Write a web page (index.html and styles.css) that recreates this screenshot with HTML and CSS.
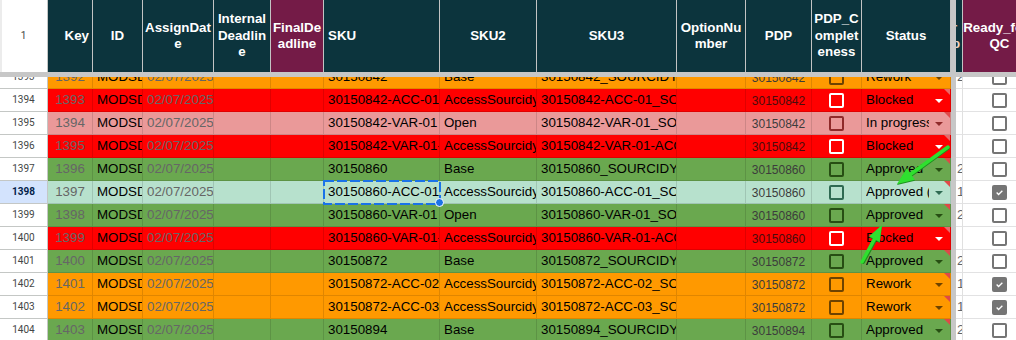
FILE: index.html
```html
<!DOCTYPE html>
<html>
<head>
<meta charset="utf-8">
<link rel="stylesheet" href="styles.css">
</head>
<body>
<div class="sheet">
  <div class="row head">
    <div class="c rn">1</div>
    <div class="c key hr">Key</div>
    <div class="c id">ID</div>
    <div class="c dt">AssignDat<br>e</div>
    <div class="c ind">Internal<br>Deadlin<br>e</div>
    <div class="c fd pur">FinalDe<br>adline</div>
    <div class="c sku hl">SKU</div>
    <div class="c s2">SKU2</div>
    <div class="c s3">SKU3</div>
    <div class="c opt">OptionNu<br>mber</div>
    <div class="c pdp">PDP</div>
    <div class="c pc">PDP_C<br>omplet<br>eness</div>
    <div class="c st">Status</div>
    <div class="vd"></div>
    <div class="c nr"><span class="peek">r<br>p</span></div>
    <div class="c rq pur">Ready_for_<br>QC</div>
  </div>
  <div class="hdiv"></div>
  <div class="body">
    <div class="row o first">
      <div class="c rn">1393</div><div class="c key">1392</div><div class="c id">MODSD</div><div class="c dt">02/07/2025</div><div class="c ind"></div><div class="c fd"></div>
      <div class="c sku">30150842</div><div class="c s2">Base</div><div class="c s3">30150842_SOURCIDY</div><div class="c opt"></div><div class="c pdp">30150842</div>
      <div class="c pc"><span class="cb"></span></div>
      <div class="c st"><span class="tx">Rework</span><span class="dd"></span><i class="corner"></i></div>
      <div class="vd"></div><div class="c nr">2</div><div class="c rq"><span class="box"></span></div>
    </div>
    <div class="row r">
      <div class="c rn">1394</div><div class="c key">1393</div><div class="c id">MODSD</div><div class="c dt">02/07/2025</div><div class="c ind"></div><div class="c fd"></div>
      <div class="c sku">30150842-ACC-01</div><div class="c s2">AccessSourcidy</div><div class="c s3">30150842-ACC-01_SOURCIDY</div><div class="c opt"></div><div class="c pdp">30150842</div>
      <div class="c pc"><span class="cb"></span></div>
      <div class="c st"><span class="tx">Blocked</span><span class="dd"></span><i class="corner"></i></div>
      <div class="vd"></div><div class="c nr"></div><div class="c rq"><span class="box"></span></div>
    </div>
    <div class="row p">
      <div class="c rn">1395</div><div class="c key">1394</div><div class="c id">MODSD</div><div class="c dt">02/07/2025</div><div class="c ind"></div><div class="c fd"></div>
      <div class="c sku">30150842-VAR-01</div><div class="c s2">Open</div><div class="c s3">30150842-VAR-01_SOURCIDY</div><div class="c opt"></div><div class="c pdp">30150842</div>
      <div class="c pc"><span class="cb"></span></div>
      <div class="c st"><span class="tx">In progress</span><span class="dd"></span><i class="corner"></i></div>
      <div class="vd"></div><div class="c nr"></div><div class="c rq"><span class="box"></span></div>
    </div>
    <div class="row r">
      <div class="c rn">1396</div><div class="c key">1395</div><div class="c id">MODSD</div><div class="c dt">02/07/2025</div><div class="c ind"></div><div class="c fd"></div>
      <div class="c sku">30150842-VAR-01-ACC-01</div><div class="c s2">AccessSourcidy</div><div class="c s3">30150842-VAR-01-ACC-01_SOURCIDY</div><div class="c opt"></div><div class="c pdp">30150842</div>
      <div class="c pc"><span class="cb"></span></div>
      <div class="c st"><span class="tx">Blocked</span><span class="dd"></span><i class="corner"></i></div>
      <div class="vd"></div><div class="c nr"></div><div class="c rq"><span class="box"></span></div>
    </div>
    <div class="row g">
      <div class="c rn">1397</div><div class="c key">1396</div><div class="c id">MODSD</div><div class="c dt">02/07/2025</div><div class="c ind"></div><div class="c fd"></div>
      <div class="c sku">30150860</div><div class="c s2">Base</div><div class="c s3">30150860_SOURCIDY</div><div class="c opt"></div><div class="c pdp">30150860</div>
      <div class="c pc"><span class="cb"></span></div>
      <div class="c st"><span class="tx">Approved</span><span class="dd"></span><i class="corner"></i></div>
      <div class="vd"></div><div class="c nr">2</div><div class="c rq"><span class="box"></span></div>
    </div>
    <div class="row t sel">
      <div class="c rn">1398</div><div class="c key">1397</div><div class="c id">MODSD</div><div class="c dt">02/07/2025</div><div class="c ind"></div><div class="c fd"></div>
      <div class="c sku active">30150860-ACC-01<svg class="ants" viewBox="0 0 118 25"><rect x="1" y="1" width="116" height="23"/></svg><span class="handle"></span></div><div class="c s2">AccessSourcidy</div><div class="c s3">30150860-ACC-01_SOURCIDY</div><div class="c opt"></div><div class="c pdp">30150860</div>
      <div class="c pc"><span class="cb"></span></div>
      <div class="c st"><span class="tx">Approved (QC)</span><span class="dd"></span><i class="corner"></i></div>
      <div class="vd"></div><div class="c nr">1</div><div class="c rq"><span class="box on"><svg viewBox="0 0 15 15"><path d="M3.6 7.6l2.6 2.6 5.2-5.2"/></svg></span></div>
    </div>
    <div class="row g">
      <div class="c rn">1399</div><div class="c key">1398</div><div class="c id">MODSD</div><div class="c dt">02/07/2025</div><div class="c ind"></div><div class="c fd"></div>
      <div class="c sku">30150860-VAR-01</div><div class="c s2">Open</div><div class="c s3">30150860-VAR-01_SOURCIDY</div><div class="c opt"></div><div class="c pdp">30150860</div>
      <div class="c pc"><span class="cb"></span></div>
      <div class="c st"><span class="tx">Approved</span><span class="dd"></span><i class="corner"></i></div>
      <div class="vd"></div><div class="c nr">2</div><div class="c rq"><span class="box"></span></div>
    </div>
    <div class="row r">
      <div class="c rn">1400</div><div class="c key">1399</div><div class="c id">MODSD</div><div class="c dt">02/07/2025</div><div class="c ind"></div><div class="c fd"></div>
      <div class="c sku">30150860-VAR-01-ACC-01</div><div class="c s2">AccessSourcidy</div><div class="c s3">30150860-VAR-01-ACC-01_SOURCIDY</div><div class="c opt"></div><div class="c pdp">30150860</div>
      <div class="c pc"><span class="cb"></span></div>
      <div class="c st"><span class="tx">Blocked</span><span class="dd"></span><i class="corner"></i></div>
      <div class="vd"></div><div class="c nr"></div><div class="c rq"><span class="box"></span></div>
    </div>
    <div class="row g">
      <div class="c rn">1401</div><div class="c key">1400</div><div class="c id">MODSD</div><div class="c dt">02/07/2025</div><div class="c ind"></div><div class="c fd"></div>
      <div class="c sku">30150872</div><div class="c s2">Base</div><div class="c s3">30150872_SOURCIDY</div><div class="c opt"></div><div class="c pdp">30150872</div>
      <div class="c pc"><span class="cb"></span></div>
      <div class="c st"><span class="tx">Approved</span><span class="dd"></span><i class="corner"></i></div>
      <div class="vd"></div><div class="c nr">2</div><div class="c rq"><span class="box"></span></div>
    </div>
    <div class="row o">
      <div class="c rn">1402</div><div class="c key">1401</div><div class="c id">MODSD</div><div class="c dt">02/07/2025</div><div class="c ind"></div><div class="c fd"></div>
      <div class="c sku">30150872-ACC-02</div><div class="c s2">AccessSourcidy</div><div class="c s3">30150872-ACC-02_SOURCIDY</div><div class="c opt"></div><div class="c pdp">30150872</div>
      <div class="c pc"><span class="cb"></span></div>
      <div class="c st"><span class="tx">Rework</span><span class="dd"></span><i class="corner"></i></div>
      <div class="vd"></div><div class="c nr">1</div><div class="c rq"><span class="box on"><svg viewBox="0 0 15 15"><path d="M3.6 7.6l2.6 2.6 5.2-5.2"/></svg></span></div>
    </div>
    <div class="row o">
      <div class="c rn">1403</div><div class="c key">1402</div><div class="c id">MODSD</div><div class="c dt">02/07/2025</div><div class="c ind"></div><div class="c fd"></div>
      <div class="c sku">30150872-ACC-03</div><div class="c s2">AccessSourcidy</div><div class="c s3">30150872-ACC-03_SOURCIDY</div><div class="c opt"></div><div class="c pdp">30150872</div>
      <div class="c pc"><span class="cb"></span></div>
      <div class="c st"><span class="tx">Rework</span><span class="dd"></span><i class="corner"></i></div>
      <div class="vd"></div><div class="c nr">1</div><div class="c rq"><span class="box on"><svg viewBox="0 0 15 15"><path d="M3.6 7.6l2.6 2.6 5.2-5.2"/></svg></span></div>
    </div>
    <div class="row g">
      <div class="c rn">1404</div><div class="c key">1403</div><div class="c id">MODSD</div><div class="c dt">02/07/2025</div><div class="c ind"></div><div class="c fd"></div>
      <div class="c sku">30150894</div><div class="c s2">Base</div><div class="c s3">30150894_SOURCIDY</div><div class="c opt"></div><div class="c pdp">30150894</div>
      <div class="c pc"><span class="cb"></span></div>
      <div class="c st"><span class="tx">Approved</span><span class="dd"></span><i class="corner"></i></div>
      <div class="vd"></div><div class="c nr">2</div><div class="c rq"><span class="box"></span></div>
    </div>
  </div>
  <svg class="arrows" width="1016" height="340" viewBox="0 0 1016 340">
    <g class="shade">
      <line x1="948" y1="148" x2="910.8" y2="175"/>
      <polygon points="897,185 914.9,180.7 906.7,169.3"/>
      <line x1="863" y1="262" x2="875" y2="240"/>
      <polygon points="882,226 879.7,243 869.1,237.2"/>
    </g>
    <g class="bright">
      <line x1="948" y1="147" x2="910.8" y2="174"/>
      <polygon points="897,184 914.9,179.7 906.7,168.3"/>
      <line x1="862" y1="262" x2="874.4" y2="239.1"/>
      <polygon points="882,225 879.7,242 869.1,236.2"/>
    </g>
  </svg>
</div>
</body>
</html>
```
FILE: styles.css
```css
* { box-sizing: border-box; }
html, body { margin: 0; padding: 0; background: #fff; }
body { width: 1016px; height: 340px; overflow: hidden; }

.sheet {
  position: relative;
  width: 1016px;
  height: 340px;
  overflow: hidden;
  font-family: "Liberation Sans", Arial, sans-serif;
  font-size: 13.33px;
  color: #000;
}

.row { display: flex; flex-shrink: 0; width: 1100px; }

.c {
  flex-shrink: 0;
  overflow: hidden;
  white-space: nowrap;
  border-right: 1px solid rgba(0,0,0,0.12);
}

/* column widths */
.rn { width: 48px; }
.key { width: 45px; }
.id { width: 50px; }
.dt { width: 71px; }
.ind { width: 57px; }
.fd { width: 53px; }
.sku { width: 116px; }
.s2 { width: 97px; }
.s3 { width: 140px; }
.opt { width: 69px; }
.pdp { width: 66px; }
.pc { width: 50px; }
.st { width: 89px; }
.vd { width: 5px; flex-shrink: 0; background: #c7c7c7; }
.nr { width: 7px; }
.rq { width: 74px; }

/* header row */
.head { height: 72px; }
.head .c {
  background: #0c343d;
  color: #fff;
  font-weight: bold;
  line-height: 16.5px;
  display: flex;
  align-items: center;
  justify-content: center;
  text-align: center;
  border-right: 1px solid #c3c3c3;
}
.head .c.pur { background: #741b47; }
.head .c.hr { justify-content: flex-end; padding-right: 3px; }
.head .c.hl { justify-content: flex-start; padding-left: 4px; }
.head .c.rn {
  background: #fff;
  color: #444746;
  font-weight: normal;
  font-family: Roboto, "Liberation Sans", sans-serif;
  font-size: 10px;
  border-right: 1px solid #c4c7c5;
  box-shadow: inset 2px 0 0 #ececec;
}
.head .c.nr { justify-content: flex-start; }
.peek { color: #f3d2bf; margin-left: -4px; text-align: left; }
.head .c.rq { justify-content: center; padding-right: 0; }

.hdiv { height: 5px; background: #c7c7c7; }

/* body */
.body { height: 263px; overflow: hidden; }
.body .row { height: 23px; background: var(--bg); }
.body .row.first { margin-top: -11px; }
.body .c {
  height: 23px;
  line-height: 22px;
  border-bottom: 1px solid rgba(0,0,0,0.12);
  padding: 0 0 0 4px;
}

.o { --bg: #ff9900; --acc: #6e4300; }
.r { --bg: #ff0000; --acc: #ffffff; }
.p { --bg: #ea9999; --acc: #8f2a2a; }
.g { --bg: #6aa84f; --acc: #274e13; }
.t { --bg: #b7e1cd; --acc: #2f6a52; }

.body .c.rn {
  background: #fff;
  color: #444746;
  font-family: Roboto, "Liberation Sans", sans-serif;
  font-size: 10px;
  text-align: center;
  padding: 0;
  border-right: 1px solid #c4c7c5;
  border-bottom: 1px solid #c4c7c5;
}
.body .sel .c.rn {
  background: #d3e3fd;
  color: #041e49;
  font-weight: bold;
}

.body .c.key { color: #666; text-align: center; padding: 0; }
.body .c.dt { color: #666; padding-right: 0; }
.body .c.pdp {
  text-align: center;
  padding: 1px 0 0;
  font-size: 12px;
  line-height: 22px;
  color: #3c3c3c;
}
.body .r .c.pdp { color: #4a0c0c; }

.body .c.pc {
  display: flex;
  align-items: center;
  justify-content: center;
  padding: 0;
}
.cb {
  width: 15px;
  height: 15px;
  border: 2px solid var(--acc);
  border-radius: 2px;
}

.body .c.st {
  position: relative;
  display: flex;
  align-items: center;
  padding-left: 4px;
}
.tx { flex: 1; overflow: hidden; white-space: nowrap; }
.dd {
  flex-shrink: 0;
  width: 0;
  height: 0;
  margin: 1px 7px 0 6px;
  border-left: 4px solid transparent;
  border-right: 4px solid transparent;
  border-top: 4px solid var(--acc);
}
.corner {
  position: absolute;
  top: 0;
  right: 0;
  width: 0;
  height: 0;
  border-top: 6px solid #e04848;
  border-left: 6px solid transparent;
}
.r .corner { border-top-color: #e86a6a; }

.body .vd { height: 23px; }
.body .c.nr {
  background: #fff;
  color: #5f6368;
  padding: 0 0 0 1px;
  border-right: 1px solid #e0e0e0;
  border-bottom: 1px solid #e2e2e3;
}
.body .c.rq {
  background: #fff;
  display: flex;
  align-items: center;
  justify-content: center;
  padding: 0;
  border-bottom: 1px solid #e2e2e3;
}
.box {
  width: 15px;
  height: 15px;
  border: 2px solid #757575;
  border-radius: 2px;
  display: flex;
}
.box.on { background: #757575; }
.box svg { width: 11px; height: 11px; }
.box path { fill: none; stroke: #fff; stroke-width: 1.8; }

/* active (copied) cell */
.body .c.active { position: relative; overflow: visible; }
.ants {
  position: absolute;
  left: -1px;
  top: -1px;
  width: 118px;
  height: 25px;
}
.ants rect {
  fill: none;
  stroke: #1a73e8;
  stroke-width: 2;
  stroke-dasharray: 10 3;
}
.handle {
  position: absolute;
  right: -5px;
  bottom: -4px;
  width: 9px;
  height: 9px;
  border-radius: 50%;
  background: #1a73e8;
  border: 1px solid #fff;
  z-index: 2;
}

.arrows { position: absolute; left: 0; top: 0; pointer-events: none; }
.arrows .shade line { stroke: #1d8f1d; stroke-width: 4; stroke-linecap: round; }
.arrows .shade polygon { fill: #1d8f1d; }
.arrows .bright line { stroke: #2fe02f; stroke-width: 3.5; stroke-linecap: round; }
.arrows .bright polygon { fill: #2fe02f; }
```
